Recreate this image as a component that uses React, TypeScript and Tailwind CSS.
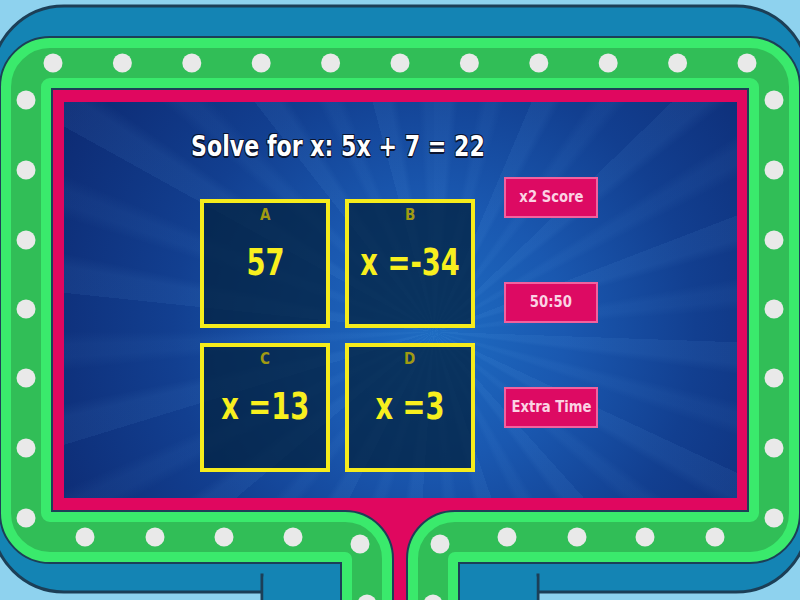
const TOP_DOTS = Array.from({ length: 11 }, (_, i) => [53 + i * 69.4, 63]);
const SIDE_Y = [100, 170, 240, 309, 378, 448, 518];
const DOTS = [
  ...TOP_DOTS,
  ...SIDE_Y.map((y) => [26, y]),
  ...SIDE_Y.map((y) => [774, y]),
  [85, 537], [155, 537], [224, 537], [293, 537], [360, 544], [367, 604],
  [440, 544], [507, 537], [577, 537], [645, 537], [715, 537], [433, 604],
];

const RING =
  "M 367 620 L 367 559 A 22 22 0 0 0 345 537 L 50 537 A 24 24 0 0 1 26 513 L 26 87 A 24 24 0 0 1 50 63 L 750 63 A 24 24 0 0 1 774 87 L 774 513 A 24 24 0 0 1 750 537 L 455 537 A 22 22 0 0 0 433 559 L 433 620";

function Frame() {
  return (
    <svg className="absolute inset-0" width="800" height="600" viewBox="0 0 800 600">
      <rect x="-8" y="6" width="816" height="586" rx="72" fill="#1484b4" stroke="#1c3f57" strokeWidth="3" />
      <rect x="262" y="575" width="276" height="40" fill="#1484b4" stroke="#1c3f57" strokeWidth="3" />
      <rect x="263.5" y="570" width="273" height="40" fill="#1484b4" />
      <rect x="40" y="80" width="720" height="440" fill="#e0075f" />
      <rect x="345" y="505" width="110" height="100" fill="#e0075f" />
      <path d={RING} fill="none" stroke="#1c3f57" strokeWidth="54" strokeLinejoin="round" />
      <path d={RING} fill="none" stroke="#3aea6c" strokeWidth="50" strokeLinejoin="round" />
      <path d={RING} fill="none" stroke="#31be57" strokeWidth="30" strokeLinejoin="round" />
      {DOTS.map(([x, y], i) => (
        <circle key={i} cx={x} cy={y} r="9.5" fill="#e9e9e9" />
      ))}
    </svg>
  );
}

const answers = [
  { key: "A", text: "57" },
  { key: "B", text: "x =-34" },
  { key: "C", text: "x =13" },
  { key: "D", text: "x =3" },
];

const powerUps = ["x2 Score", "50:50", "Extra Time"];

export default function App() {
  return (
    <div className="relative w-[800px] h-[600px] overflow-hidden bg-[#8ed2ee] font-['DejaVu_Sans',sans-serif]">
      <Frame />
      <div className="relative pt-[102px] pl-[64px]">
        <div className="w-[673px] h-[396px] flex pl-[136px] pt-[29px] bg-[repeating-conic-gradient(from_0deg_at_55%_58%,rgba(120,190,255,0.07)_0deg_4deg,rgba(0,0,0,0)_6deg_11deg,rgba(120,190,255,0.05)_13deg_15deg,rgba(0,0,0,0)_17deg_23deg),radial-gradient(circle_at_55%_58%,#1e6cc2_0%,#1a58b0_30%,#123f90_60%,#0d2a72_100%)]">
          <div className="flex flex-col items-center w-[275px]">
            <h1 className="h-[32px] leading-[32px] whitespace-nowrap text-[28px] font-bold text-white [transform:scaleX(0.79)] [text-shadow:-1px_-1px_0_#0b1530,1px_-1px_0_#0b1530,-1px_1px_0_#0b1530,1px_1px_0_#0b1530,0_2px_0_#0b1530]">
              Solve for x: 5x + 7 = 22
            </h1>
            <div className="mt-[36px] grid grid-cols-2 gap-[15px]">
              {answers.map((a) => (
                <div
                  key={a.key}
                  className="w-[130px] h-[129px] border-4 border-[#f6ec1c] bg-[#03223f]/75 flex flex-col items-center"
                >
                  <span className="mt-[2px] text-[16px] leading-[20px] font-bold text-[#a09a12] [transform:scaleX(0.85)]">{a.key}</span>
                  <span className="mt-[17px] whitespace-nowrap text-[38px] leading-[40px] font-bold text-[#f8ef1e] [transform:scaleX(0.72)]">{a.text}</span>
                </div>
              ))}
            </div>
          </div>
          <div className="ml-[29px] mt-[46px] flex flex-col gap-[64px]">
            {powerUps.map((p) => (
              <div
                key={p}
                className="w-[94px] h-[41px] border-2 border-[#f2619e] bg-[#dd0a63] flex items-center justify-center text-[15px] font-bold text-[#fbd3e4]"
              >
                <span className="whitespace-nowrap [transform:scaleX(0.88)]">{p}</span>
              </div>
            ))}
          </div>
        </div>
      </div>
    </div>
  );
}
